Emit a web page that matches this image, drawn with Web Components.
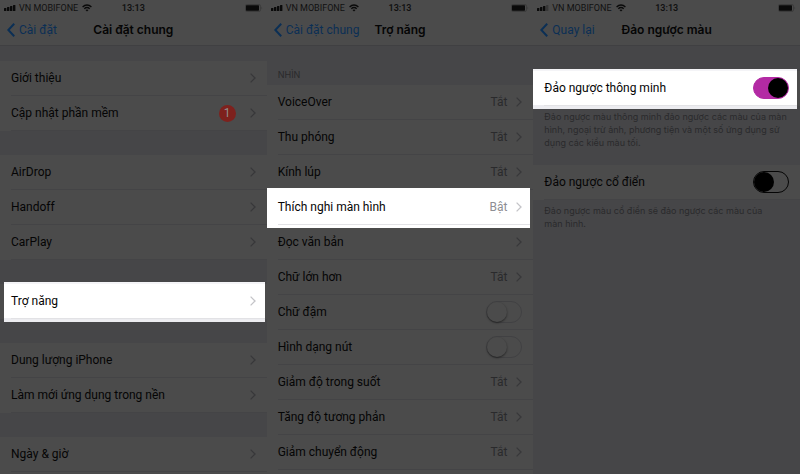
<!DOCTYPE html>
<html lang="vi">
<head>
<meta charset="utf-8">
<meta name="viewport" content="width=device-width, initial-scale=1">
<title>Trợ năng</title>
<style>
  :root{
    --row-bg : #4b4b4b;
    --group-bg : #464648;
    --line : #444446;
    --text : #050505;
    --muted : #2a2a2c;
    --chevron : #38383a;
    --link : #0b2f55;
  }
  body{
    margin : 0;
    height : 100vh;
    overflow : hidden;
    display : flex;
    background : var(--group-bg);
    color : var(--text);
    font : 12px/16px Roboto, "Noto Sans", sans-serif;
  }
  phone-screen{
    flex : 1 1 0;
    min-width : 0;
  }
  .nowrap{ white-space : nowrap; }
  .general{ --spot-left : 4px; --spot-right : 2px; }
  .access{ --spot-left : 0px; --spot-right : 3px; }
  .invert{ --spot-left : 0px; --spot-right : 3px; }
</style>
</head>
<body>

<phone-screen class="general" heading="Cài đặt chung" back="Cài đặt">
  <settings-group>
    <settings-row>Giới thiệu</settings-row>
    <settings-row badge="1">Cập nhật phần mềm</settings-row>
  </settings-group>
  <settings-group>
    <settings-row>AirDrop</settings-row>
    <settings-row>Handoff</settings-row>
    <settings-row>CarPlay</settings-row>
  </settings-group>
  <settings-group>
    <settings-row spotlight>Trợ năng</settings-row>
  </settings-group>
  <settings-group>
    <settings-row>Dung lượng iPhone</settings-row>
    <settings-row>Làm mới ứng dụng trong nền</settings-row>
  </settings-group>
  <settings-group grow>
    <settings-row>Ngày &amp; giờ</settings-row>
  </settings-group>
</phone-screen>

<phone-screen class="access" heading="Trợ năng" back="Cài đặt chung">
  <settings-group grow>
    <span slot="header">NHÌN</span>
    <settings-row value="Tắt">VoiceOver</settings-row>
    <settings-row value="Tắt">Thu phóng</settings-row>
    <settings-row value="Tắt">Kính lúp</settings-row>
    <settings-row value="Bật" spotlight="inset">Thích nghi màn hình</settings-row>
    <settings-row>Đọc văn bản</settings-row>
    <settings-row value="Tắt">Chữ lớn hơn</settings-row>
    <settings-row toggle="off">Chữ đậm</settings-row>
    <settings-row toggle="off">Hình dạng nút</settings-row>
    <settings-row value="Tắt">Giảm độ trong suốt</settings-row>
    <settings-row value="Tắt">Tăng độ tương phản</settings-row>
    <settings-row value="Tắt">Giảm chuyển động</settings-row>
  </settings-group>
</phone-screen>

<phone-screen class="invert" heading="Đảo ngược màu" back="Quay lại" signal="3">
  <settings-group>
    <settings-row toggle="on" inverted spotlight>Đảo ngược thông minh</settings-row>
    <span slot="footer">Đảo ngược màu thông minh đảo ngược các màu của màn hình, ngoại trừ ảnh, phương tiện và một số ứng dụng sử dụng các kiểu màu tối.</span>
  </settings-group>
  <settings-group>
    <settings-row toggle="off" inverted>Đảo ngược cổ điển</settings-row>
    <span slot="footer">Đảo ngược màu cổ điển sẽ đảo ngược các màu của <span class="nowrap">màn hình.</span></span>
  </settings-group>
</phone-screen>

<script>
class StatusBar extends HTMLElement {
  constructor(){
    super();
    this._shadow = this.attachShadow({mode:"open"});
  }
  connectedCallback(){
    const signal = Number(this.getAttribute("signal") || 4);
    const bars = [0, 1, 2, 3].map(i =>
      `<rect x="${i * 3}" y="${4 - i}" width="2.4" height="${3 + i}" rx="0.5" opacity="${i < signal ? 1 : 0.3}"/>`
    ).join("");
    this._shadow.innerHTML = `
      <style>
      :host{
        display : grid;
        grid-template-columns : 1fr auto 1fr;
        align-items : center;
        height : 15px;
        padding : 0 4px;
        font-size : 9px;
        line-height : 14px;
        color : #111;
      }
      svg{ display : block; fill : #0a0a0a; }
      .left{ display : flex; align-items : center; gap : 3px; white-space : nowrap; }
      .left .wifi{ margin-left : 1px; }
      .time{ font-weight : 600; }
      .battery{ justify-self : end; }
      </style>
      <div class="left">
        <svg width="12" height="8" viewBox="0 0 12 8" aria-hidden="true">${bars}</svg>
        <span>VN MOBIFONE</span>
        <svg class="wifi" width="10" height="8" viewBox="0 0 10 8" aria-hidden="true">
          <g fill="none" stroke="#0a0a0a" stroke-width="1.4">
            <path d="M.6 2.9C3.2.3 6.8.3 9.4 2.9"/>
            <path d="M2.3 4.7C3.9 3.2 6.1 3.2 7.7 4.7"/>
          </g>
          <path d="M5 7.6L3.5 6C4.3 5.2 5.7 5.2 6.5 6Z"/>
        </svg>
      </div>
      <div class="time">13:13</div>
      <svg class="battery" width="18" height="8" viewBox="0 0 18 8" aria-hidden="true">
        <rect x=".5" y=".5" width="15" height="7" rx="1.8" fill="none" stroke="#333" stroke-width=".6"/>
        <rect x="1" y="1.3" width="13" height="5.4" rx=".6"/>
        <path d="M16.6 2.8Q17.6 4 16.6 5.2Z" fill="#2c2c2c"/>
      </svg>
    `;
  }
}
customElements.define("status-bar", StatusBar);

class PhoneScreen extends HTMLElement {
  constructor(){
    super();
    this._shadow = this.attachShadow({mode:"open"});
  }
  connectedCallback(){
    this._shadow.innerHTML = `
      <style>
      :host{
        display : flex;
        flex-direction : column;
      }
      header{
        background : var(--row-bg);
        border-bottom : 1px solid #404042;
      }
      nav{
        display : grid;
        grid-template-columns : 1fr auto 1fr;
        align-items : center;
        height : 30px;
        padding : 0 7px;
      }
      a{
        display : flex;
        align-items : center;
        gap : 4px;
        color : var(--link);
        text-decoration : none;
        white-space : nowrap;
      }
      h1{
        margin : 0;
        font-family : Inter, "Noto Sans", sans-serif;
        font-size : 12px;
        font-weight : 600;
        line-height : 16px;
      }
      main{
        flex : 1;
        display : flex;
        flex-direction : column;
        gap : 24px;
        padding-top : 15px;
      }
      :host(.access) main{ padding-top : 0; }
      :host(.invert) main{ padding-top : 25px; gap : 16px; }
      </style>
      <header>
        <status-bar signal="${this.getAttribute("signal") || 4}"></status-bar>
        <nav>
          <a href="#">
            <svg width="8" height="14" viewBox="0 0 8 14" fill="none" stroke="currentColor" stroke-width="2" aria-hidden="true"><path d="M7.2.8L1.3 7L7.2 13.2"/></svg>
            <span>${this.getAttribute("back")}</span>
          </a>
          <h1>${this.getAttribute("heading")}</h1>
        </nav>
      </header>
      <main><slot></slot></main>
    `;
  }
}
customElements.define("phone-screen", PhoneScreen);

class SettingsGroup extends HTMLElement {
  constructor(){
    super();
    this._shadow = this.attachShadow({mode:"open"});
    this._shadow.innerHTML = `
      <style>
      :host{ display : block; }
      :host([grow]){
        flex : 1;
        display : flex;
        flex-direction : column;
      }
      :host([grow]) .rows{ flex : 1; }
      .rows{ background : var(--row-bg); }
      ::slotted([slot="header"]),
      ::slotted([slot="footer"]){
        display : block;
        font-family : Inter, "Noto Sans", sans-serif;
        font-size : 9px;
        line-height : 13px;
        color : var(--muted);
      }
      ::slotted([slot="header"]){ padding : 22px 11px 4px; }
      ::slotted([slot="footer"]){ padding : 4px 8px 0 11px; }
      </style>
      <slot name="header"></slot>
      <div class="rows"><slot></slot></div>
      <slot name="footer"></slot>
    `;
  }
}
customElements.define("settings-group", SettingsGroup);

class SettingsRow extends HTMLElement {
  constructor(){
    super();
    this._shadow = this.attachShadow({mode:"open"});
  }
  connectedCallback(){
    const toggle = this.getAttribute("toggle");
    this._shadow.innerHTML = `
      <style>
      :host{
        display : block;
        position : relative;
        padding-bottom : 1px;
      }
      .row{
        position : relative;
        display : flex;
        align-items : center;
        height : 34px;
        padding : 0 11px;
        color : inherit;
        text-decoration : none;
      }
      .row::after{
        content : "";
        position : absolute;
        inset : auto 0 -1px 11px;
        height : 1px;
        background : var(--line);
      }
      .label{ flex : 1; }
      .value{ color : var(--muted); margin-right : 9px; }
      .badge{
        width : 17px;
        height : 17px;
        margin-right : 14px;
        border-radius : 50%;
        background : #7e211d;
        color : #8f8f8f;
        text-align : center;
        line-height : 17px;
      }
      .chevron{ display : block; color : var(--chevron); }

      input{
        appearance : none;
        display : grid;
        align-items : center;
        box-sizing : border-box;
        width : 36px;
        height : 22px;
        margin : 0;
        border : 1px solid #414143;
        border-radius : 11px;
      }
      input::before{
        content : "";
        width : 20px;
        height : 20px;
        border-radius : 50%;
        background : var(--row-bg);
        box-shadow : 0 1px 2px rgba(0,0,0,.5);
      }
      input:checked::before{ justify-self : end; }
      :host([inverted]) input{ border-color : #050505; }
      :host([inverted]) input::before{ background : #000; box-shadow : none; }
      :host([inverted]) input:checked{
        border-color : #b32aa4;
        background : #b32aa4;
      }

      /* lit row: a bright box that spills a little over its neighbours */
      :host([spotlight]){
        z-index : 1;
        --muted : #8e8e93;
        --chevron : #c4c4c8;
        --line : #e2e2e5;
      }
      :host([spotlight])::before{
        content : "";
        position : absolute;
        inset : -2px var(--spot-right) -3px var(--spot-left);
        background : linear-gradient(#f4f4f7 2px, #fff 2px, #fff 36px, #ececf0 36px);
      }
      :host([spotlight="inset"])::before{ background : #fff; }
      :host([spotlight]) .row::after{ right : var(--spot-right); }
      </style>
      ${toggle
        ? `<label class="row"><span class="label"><slot></slot></span><input type="checkbox" role="switch" ${toggle === "on" ? "checked" : ""}></label>`
        : `<a class="row" href="#">
            <span class="label"><slot></slot></span>
            ${this.hasAttribute("value") ? `<span class="value">${this.getAttribute("value")}</span>` : ""}
            ${this.hasAttribute("badge") ? `<span class="badge">${this.getAttribute("badge")}</span>` : ""}
            <svg class="chevron" width="6" height="10" viewBox="0 0 6 10" fill="none" stroke="currentColor" stroke-width="1.3" aria-hidden="true"><path d="M.6.6L5 5L.6 9.4"/></svg>
          </a>`}
    `;
  }
}
customElements.define("settings-row", SettingsRow);
</script>
</body>
</html>
